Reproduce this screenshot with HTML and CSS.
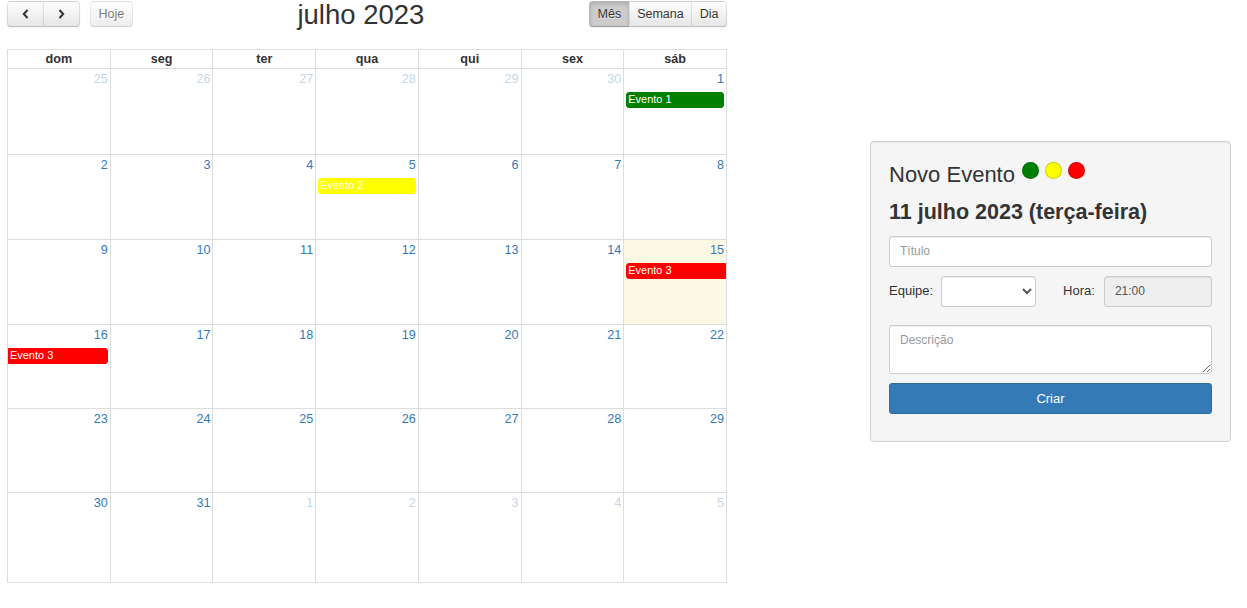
FILE: index.html
```html
<!DOCTYPE html>
<html lang="pt-BR">
<head>
<meta charset="utf-8">
<title>Calendário</title>
<link rel="stylesheet" href="styles.css">
</head>
<body>
<div class="page">
  <div class="cal">
    <div class="toolbar">
      <div class="tb-left">
        <div class="btn-group">
          <button class="fc-btn nav-btn corner-left" type="button" aria-label="anterior"><svg width="7" height="10" viewBox="0 0 7 10"><path d="M5.5 1 L1.8 5 L5.5 9" fill="none" stroke="#333" stroke-width="2"/></svg></button>
          <button class="fc-btn nav-btn corner-right" type="button" aria-label="próximo"><svg width="7" height="10" viewBox="0 0 7 10"><path d="M1.5 1 L5.2 5 L1.5 9" fill="none" stroke="#333" stroke-width="2"/></svg></button>
        </div>
        <button class="fc-btn corner-left corner-right disabled" type="button">Hoje</button>
      </div>
      <div class="tb-center"><h2 class="title">julho 2023</h2></div>
      <div class="tb-right">
        <div class="btn-group">
          <button class="fc-btn corner-left active" type="button">Mês</button>
          <button class="fc-btn" type="button">Semana</button>
          <button class="fc-btn corner-right" type="button">Dia</button>
        </div>
      </div>
    </div>

    <div class="grid">
      <div class="head">
        <div class="th">dom</div><div class="th">seg</div><div class="th">ter</div><div class="th">qua</div><div class="th">qui</div><div class="th">sex</div><div class="th">sáb</div>
      </div>

      <div class="week">
        <div class="day other"><a class="num">25</a></div>
        <div class="day other"><a class="num">26</a></div>
        <div class="day other"><a class="num">27</a></div>
        <div class="day other"><a class="num">28</a></div>
        <div class="day other"><a class="num">29</a></div>
        <div class="day other"><a class="num">30</a></div>
        <div class="day"><a class="num">1</a><div class="ev ev-green">Evento 1</div></div>
      </div>

      <div class="week">
        <div class="day"><a class="num">2</a></div>
        <div class="day"><a class="num">3</a></div>
        <div class="day"><a class="num">4</a></div>
        <div class="day"><a class="num">5</a><div class="ev ev-yellow">Evento 2</div></div>
        <div class="day"><a class="num">6</a></div>
        <div class="day"><a class="num">7</a></div>
        <div class="day"><a class="num">8</a></div>
      </div>

      <div class="week">
        <div class="day"><a class="num">9</a></div>
        <div class="day"><a class="num">10</a></div>
        <div class="day"><a class="num">11</a></div>
        <div class="day"><a class="num">12</a></div>
        <div class="day"><a class="num">13</a></div>
        <div class="day"><a class="num">14</a></div>
        <div class="day today"><a class="num">15</a><div class="ev ev-red not-end">Evento 3</div></div>
      </div>

      <div class="week">
        <div class="day"><a class="num">16</a><div class="ev ev-red not-start">Evento 3</div></div>
        <div class="day"><a class="num">17</a></div>
        <div class="day"><a class="num">18</a></div>
        <div class="day"><a class="num">19</a></div>
        <div class="day"><a class="num">20</a></div>
        <div class="day"><a class="num">21</a></div>
        <div class="day"><a class="num">22</a></div>
      </div>

      <div class="week">
        <div class="day"><a class="num">23</a></div>
        <div class="day"><a class="num">24</a></div>
        <div class="day"><a class="num">25</a></div>
        <div class="day"><a class="num">26</a></div>
        <div class="day"><a class="num">27</a></div>
        <div class="day"><a class="num">28</a></div>
        <div class="day"><a class="num">29</a></div>
      </div>

      <div class="week">
        <div class="day"><a class="num">30</a></div>
        <div class="day"><a class="num">31</a></div>
        <div class="day other"><a class="num">1</a></div>
        <div class="day other"><a class="num">2</a></div>
        <div class="day other"><a class="num">3</a></div>
        <div class="day other"><a class="num">4</a></div>
        <div class="day other"><a class="num">5</a></div>
      </div>
    </div>
  </div>

  <div class="well">
    <h3 class="panel-title">Novo Evento<span class="dots"><i class="dot dot-green"></i><i class="dot dot-yellow"></i><i class="dot dot-red"></i></span></h3>
    <h4 class="panel-date">11 julho 2023 (terça-feira)</h4>
    <input class="form-control" type="text" placeholder="Título">
    <div class="form-row">
      <label class="lbl">Equipe:</label>
      <select class="form-control sel"><option></option></select>
      <label class="lbl lbl-hora">Hora:</label>
      <input class="form-control hora" type="text" value="21:00" readonly>
    </div>
    <textarea class="form-control desc" placeholder="Descrição"></textarea>
    <button class="btn-primary" type="button">Criar</button>
  </div>
</div>
</body>
</html>
```

FILE: styles.css
```css
* { box-sizing: border-box; }

html, body {
  margin: 0;
  padding: 0;
  background: #fff;
}

body {
  font-family: "Liberation Sans", Arial, Helvetica, sans-serif;
  font-size: 14px;
  line-height: 1.42857143;
  color: #333;
}

.page {
  display: flex;
  align-items: center;
  padding-left: 7px;
}

/* ---------- calendar ---------- */
.cal {
  width: 720px;
  font-size: 12.6px;
}

.toolbar {
  display: flex;
  align-items: flex-start;
  height: 30px;
  margin-bottom: 19px;
}

.tb-left, .tb-right {
  display: flex;
  align-items: flex-start;
  padding-top: 1px;
}

.tb-center {
  flex: 1;
  text-align: center;
}

.title {
  margin: 0;
  font-size: 27.5px;
  font-weight: 500;
  line-height: 1.1;
  color: #333;
}

.btn-group { display: flex; }

.fc-btn {
  height: 26px;
  padding: 0 0.6em;
  margin: 0;
  font-family: inherit;
  font-size: 12.5px;
  color: #333;
  background-color: #f5f5f5;
  background-image: linear-gradient(to bottom, #fff, #e6e6e6);
  border: 1px solid;
  border-color: rgba(0,0,0,.1) rgba(0,0,0,.1) rgba(0,0,0,.25);
  border-radius: 0;
  text-shadow: 0 1px 1px rgba(255,255,255,.75);
  box-shadow: inset 0 1px 0 rgba(255,255,255,.2), 0 1px 2px rgba(0,0,0,.05);
  display: flex;
  align-items: center;
  justify-content: center;
  white-space: nowrap;
  cursor: pointer;
}

.btn-group .fc-btn + .fc-btn { margin-left: -1px; }

.fc-btn.nav-btn { width: 37px; }

.corner-left { border-top-left-radius: 4px; border-bottom-left-radius: 4px; }
.corner-right { border-top-right-radius: 4px; border-bottom-right-radius: 4px; }

.fc-btn.disabled {
  opacity: .65;
  box-shadow: none;
  cursor: default;
  margin-left: 10px;
}

.fc-btn.active {
  background-color: #ccc;
  background-image: none;
  box-shadow: inset 0 2px 4px rgba(0,0,0,.15), 0 1px 2px rgba(0,0,0,.05);
}

.grid {
  border-top: 1px solid #ddd;
  border-left: 1px solid #ddd;
}

.head, .week {
  display: grid;
  grid-template-columns: repeat(7, 1fr);
}

.th {
  height: 19px;
  line-height: 18px;
  text-align: center;
  font-weight: bold;
  border-right: 1px solid #ddd;
  border-bottom: 1px solid #ddd;
}

.day {
  border-right: 1px solid #ddd;
  border-bottom: 1px solid #ddd;
  height: 85px;
  overflow: hidden;
}

.week:nth-child(2) .day { height: 86px; }
.week:nth-child(3) .day { height: 85px; }
.week:nth-child(4) .day { height: 85px; }
.week:nth-child(5) .day { height: 84px; }
.week:nth-child(6) .day { height: 84px; }
.week:nth-child(7) .day { height: 90px; }

.day.today { background: #fcf8e3; }

.num {
  display: block;
  text-align: right;
  padding: 1px 2px 2px;
  line-height: 18px;
  color: #337ab7;
  text-decoration: none;
}

.other .num { opacity: .3; }

.ev {
  margin: 2px 2px 0;
  padding: 0 1px;
  border: 1px solid;
  border-radius: 3px;
  font-size: .87em;
  line-height: 1.27;
  color: #fff;
  white-space: nowrap;
  overflow: hidden;
}

.ev-green { background: #008000; border-color: #008000; }
.ev-yellow { background: #ffff00; border-color: #ffff00; }
.ev-red { background: #ff0000; border-color: #ff0000; }

.ev.not-end {
  margin-right: 0;
  border-top-right-radius: 0;
  border-bottom-right-radius: 0;
}

.ev.not-start {
  margin-left: 0;
  border-top-left-radius: 0;
  border-bottom-left-radius: 0;
}

/* ---------- panel ---------- */
.well {
  margin-left: 143px;
  width: 361px;
  padding: 18px;
  background: #f5f5f5;
  border: 1px solid #d0d0d0;
  border-radius: 4px;
  box-shadow: inset 0 1px 1px rgba(0,0,0,.05);
}

.panel-title {
  margin: 3px 0 14px;
  font-size: 22px;
  font-weight: 500;
  line-height: 1.1;
  color: #333;
}

.dots {
  display: inline-flex;
  gap: 6px;
  margin-left: 7px;
  vertical-align: top;
  margin-top: -1px;
}

.dot {
  display: block;
  width: 17px;
  height: 17px;
  border-radius: 50%;
  border: 1px solid rgba(0,0,0,.18);
}

.dot-green { background: #008000; }
.dot-yellow { background: #ffff00; }
.dot-red { background: #ff0000; }

.panel-date {
  margin: 0 0 11px;
  font-size: 21.5px;
  font-weight: bold;
  line-height: 1.1;
  color: #333;
}

.form-control {
  display: block;
  width: 100%;
  height: 31px;
  padding: 5px 10px;
  font-family: inherit;
  font-size: 12px;
  line-height: 1.5;
  color: #555;
  background: #fff;
  border: 1px solid #ccc;
  border-radius: 3px;
  box-shadow: inset 0 1px 1px rgba(0,0,0,.075);
}

.form-control::placeholder { color: #999; }

.form-row {
  display: flex;
  align-items: center;
  margin-top: 9px;
}

.lbl {
  font-size: 13px;
  color: #333;
}

.sel {
  width: 95px;
  margin-left: 8px;
  padding: 5px 6px;
}

.lbl-hora { margin-left: 27px; }

.hora {
  width: 108px;
  margin-left: 9px;
  background: #eee;
  color: #555;
}

.desc {
  height: 49px;
  margin-top: 18px;
  resize: vertical;
}

.btn-primary {
  display: block;
  width: 100%;
  height: 31px;
  margin: 9px 0 9px;
  font-family: inherit;
  font-size: 13px;
  color: #fff;
  background: #337ab7;
  border: 1px solid #2e6da4;
  border-radius: 3px;
  cursor: pointer;
}
```
